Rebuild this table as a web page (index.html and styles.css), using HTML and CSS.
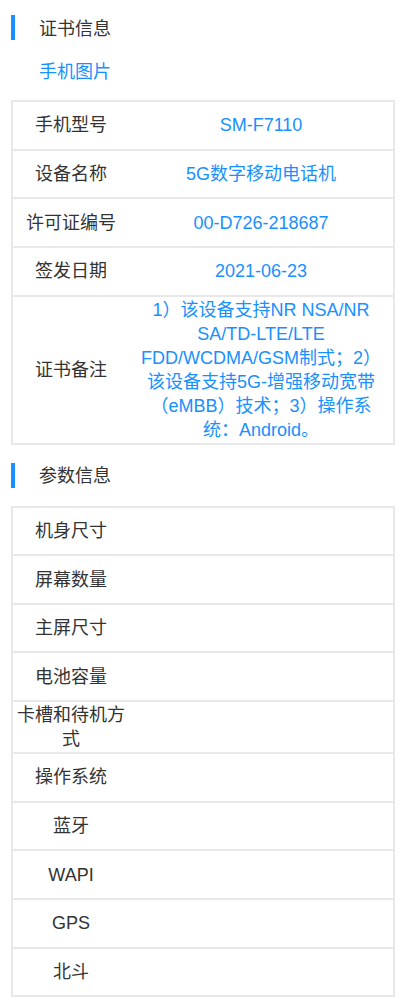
FILE: index.html
```html
<!DOCTYPE html>
<html lang="zh-CN">
<head>
<meta charset="utf-8">
<title>证书信息</title>
<link rel="stylesheet" href="styles.css">
</head>
<body>
<section class="section">
  <h2 class="sec-title"><span class="bar"></span><span class="sec-text">证书信息</span></h2>
  <a class="photo-link" href="#">手机图片</a>
  <div class="table">
    <div class="row"><div class="label">手机型号</div><div class="value">SM-F7110</div></div>
    <div class="row"><div class="label">设备名称</div><div class="value">5G数字移动电话机</div></div>
    <div class="row"><div class="label">许可证编号</div><div class="value">00-D726-218687</div></div>
    <div class="row"><div class="label">签发日期</div><div class="value">2021-06-23</div></div>
    <div class="row"><div class="label">证书备注</div><div class="value">1）该设备支持NR NSA/NR SA/TD-LTE/LTE FDD/WCDMA/GSM制式；2）该设备支持5G-增强移动宽带（eMBB）技术；3）操作系统：Android。</div></div>
  </div>
</section>
<section class="section section-2">
  <h2 class="sec-title"><span class="bar"></span><span class="sec-text">参数信息</span></h2>
  <div class="table">
    <div class="row"><div class="label">机身尺寸</div><div class="value"></div></div>
    <div class="row"><div class="label">屏幕数量</div><div class="value"></div></div>
    <div class="row"><div class="label">主屏尺寸</div><div class="value"></div></div>
    <div class="row"><div class="label">电池容量</div><div class="value"></div></div>
    <div class="row"><div class="label">卡槽和待机方式</div><div class="value"></div></div>
    <div class="row"><div class="label">操作系统</div><div class="value"></div></div>
    <div class="row"><div class="label">蓝牙</div><div class="value"></div></div>
    <div class="row"><div class="label">WAPI</div><div class="value"></div></div>
    <div class="row"><div class="label">GPS</div><div class="value"></div></div>
    <div class="row"><div class="label">北斗</div><div class="value"></div></div>
  </div>
</section>
</body>
</html>
```
FILE: styles.css
```css
html, body {
  margin: 0;
  padding: 0;
  background: #fff;
}
body {
  font-family: "Liberation Sans", "Noto Sans CJK SC", sans-serif;
  font-size: 18px;
  color: #333;
  width: 400px;
}
.section {
  padding: 15px 5px 0 11px;
}
.section-2 {
  padding-top: 18px;
}
.sec-title {
  display: flex;
  align-items: center;
  margin: 0;
  height: 25px;
  font-size: 18px;
  font-weight: normal;
  color: #333;
  line-height: 25px;
}
.sec-text {
  padding-top: 3px;
}
.bar {
  width: 4px;
  height: 25px;
  background: #1890ff;
  margin-right: 24px;
}
.photo-link {
  display: block;
  margin: 20px 0 16px 28px;
  line-height: 24px;
  color: #1890ff;
  text-decoration: none;
}
.section-2 .table {
  margin-top: 18px;
}
.table {
  border: 1px solid #e8e8e8;
}
.row {
  display: flex;
  align-items: center;
  min-height: 48.65px;
  box-sizing: border-box;
  border: 1px solid #e8e8e8;
  padding: 1px 0;
}
.label {
  width: 116px;
  flex: none;
  box-sizing: border-box;
  padding: 0 3px;
  text-align: center;
  line-height: 24px;
  color: #333;
}
.value {
  flex: 1;
  padding: 0 8px;
  text-align: center;
  line-height: 24px;
  color: #1890ff;
}
```
